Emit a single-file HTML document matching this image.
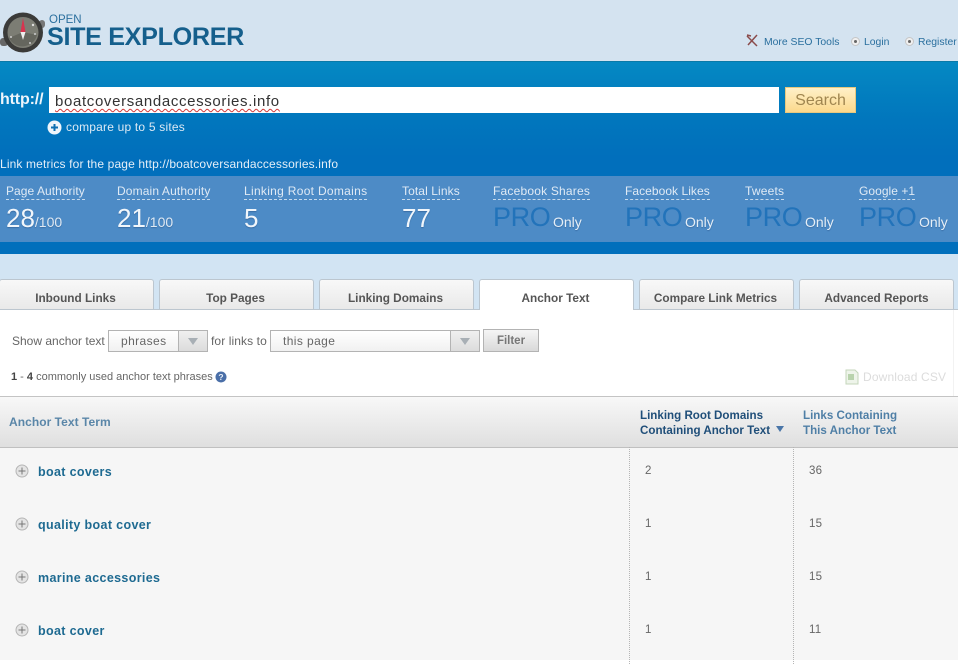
<!DOCTYPE html>
<html><head><meta charset="utf-8">
<style>
html,body{margin:0;padding:0;background:#fff}
#p{position:relative;width:958px;height:672px;overflow:hidden;font-family:"Liberation Sans",sans-serif;background:#fff}
#p div,#p svg{position:absolute}
.t{white-space:nowrap;line-height:1}
.lab{color:#dfeaf5;font-size:12px;top:185px;border-bottom:1px dashed #c5d9ec;height:14px;line-height:13px;white-space:nowrap;letter-spacing:.25px}
.num{color:#f1f6fb;font-size:26px;top:205px;line-height:26px;white-space:nowrap;text-shadow:0 1px 1px #3a6ea5}
.num small{font-size:14px;color:#dfe9f3}
.pro{color:#2273ba;font-size:27px;top:204px;line-height:27px;white-space:nowrap;letter-spacing:-.4px}
.only{color:#e6eff7;font-size:14px;top:215px;line-height:15px;white-space:nowrap;text-shadow:0 1px 1px #3a6ea5}
.tab{top:279px;height:30px;width:155px;background:linear-gradient(#f8f8f8,#e9e9e9);border:1px solid #bcc6cf;border-bottom:0;box-sizing:border-box;border-radius:3px 3px 0 0;text-align:center;font-size:11.8px;font-weight:bold;color:#555;line-height:36px}
.term{left:38px;font-size:12.5px;font-weight:bold;color:#1e6a91;white-space:nowrap;letter-spacing:.35px;line-height:14px}
.v{font-size:11.5px;color:#666;line-height:12px;white-space:nowrap;letter-spacing:.2px}
.plus{left:15px;width:14px;height:14px}
.dot{width:1px;top:447px;height:217px;border-left:1px dotted #b5b5b5}
.sel{top:330px;height:22px;box-sizing:border-box;border:1px solid #b3b3b3;background:linear-gradient(#fff,#f1f1f1);font-size:12px;color:#666;line-height:20px;letter-spacing:.4px}
.arr{top:330px;height:22px;width:30px;box-sizing:border-box;border:1px solid #b3b3b3;background:linear-gradient(#f0f0f0,#dcdcdc)}
.arr i{position:absolute;left:9px;top:7px;border-left:5px solid transparent;border-right:5px solid transparent;border-top:7px solid #a8afb5}
.g{font-size:12px;color:#666;white-space:nowrap;line-height:14px}
.nav{font-size:10.4px;color:#2a6f9e;top:36px;line-height:13px;white-space:nowrap}
.rad{top:37px;width:9px;height:9px;box-sizing:border-box;border-radius:50%;background:#f0f0f0;border:1px solid #c6c6c6}
.rad i{position:absolute;left:2px;top:2px;width:3px;height:3px;border-radius:50%;background:#666}
</style></head>
<body><div id="p">

<div style="left:0;top:0;width:958px;height:61px;background:#d4e3f0"></div>

<svg style="left:0;top:11px" width="46" height="43" viewBox="0 0 46 43">
<rect x="0" y="27" width="8" height="8" rx="3" fill="#666"/>
<rect x="39" y="9" width="6" height="8" rx="3" fill="#777"/>
<circle cx="23" cy="21.500" r="20" fill="#3b3b39"/>
<circle cx="23" cy="21.500" r="15.500" fill="#7c7d74"/>
<path d="M9 27A15 15 0 0 0 37 24L23 21Z" fill="#65665e"/>
<path d="M23 7L25.500 21L20.500 21Z" fill="#d8344f"/>
<path d="M20.500 21L25.500 21L23 29Z" fill="#eee"/>
<circle cx="33" cy="14" r="1.200" fill="#ddd"/><circle cx="35" cy="23" r="1" fill="#ccc"/><circle cx="11" cy="26" r="1" fill="#ccc"/><circle cx="30" cy="32" r="1" fill="#ccc"/>
</svg>

<div class="t" style="left:49px;top:15px;font-size:11.5px;color:#2a6f9e">OPEN</div>
<div class="t" style="left:47px;top:25px;font-size:25.2px;font-weight:bold;color:#155f8c;letter-spacing:-.35px">SITE EXPLORER</div>

<svg style="left:746px;top:34px" width="13" height="13" viewBox="0 0 13 13"><path d="M1 2L11 12M11 1L2 11M1 1L5 2" stroke="#8a4b4b" stroke-width="1.500" fill="none"/></svg>
<div class="nav" style="left:764px">More SEO Tools</div>
<div class="rad" style="left:851px"><i></i></div>
<div class="nav" style="left:864px">Login</div>
<div class="rad" style="left:905px"><i></i></div>
<div class="nav" style="left:918px">Register</div>

<div style="left:0;top:61px;width:958px;height:193px;background:linear-gradient(#0589c3 0,#0177bd 55px,#016fbc 95px,#016fbc 100%);border-top:1px solid #0a7aa8;box-sizing:border-box"></div>

<div class="t" style="left:0;top:92px;font-size:16px;font-weight:bold;color:#eef5fb;letter-spacing:-.15px">http://</div>
<div style="left:49px;top:87px;width:730px;height:26px;background:#fff"></div>
<div class="t" style="left:55px;top:94px;font-size:15px;color:#333;letter-spacing:.65px;text-decoration:underline wavy #d23a3a 1px;text-underline-offset:2px">boatcoversandaccessories.info</div>
<div style="left:785px;top:87px;width:71px;height:26px;box-sizing:border-box;background:linear-gradient(#fff0c8,#fbd98c);border:1px solid #e8c87e;text-align:center;font-size:16px;color:#a08650;line-height:26px">Search</div>
<svg style="left:47px;top:120px" width="15" height="15" viewBox="0 0 15 15"><circle cx="7.500" cy="7.500" r="7" fill="#eef5fb"/><path d="M4 7.500H11M7.500 4V11" stroke="#0d6fb2" stroke-width="2"/></svg>
<div class="t" style="left:66px;top:121px;font-size:12px;color:#dce9f4;letter-spacing:.2px">compare up to 5 sites</div>

<div class="t" style="left:0;top:158px;font-size:12px;color:#e4eef7;letter-spacing:.14px">Link metrics for the page http://boatcoversandaccessories.info</div>

<div style="left:0;top:176px;width:958px;height:66px;background:#4d8bc6"></div>

<div class="lab" style="left:6px;letter-spacing:.05px">Page Authority</div>
<div class="num" style="left:6px">28<small>/100</small></div>
<div class="lab" style="left:117px;letter-spacing:.13px">Domain Authority</div>
<div class="num" style="left:117px">21<small>/100</small></div>
<div class="lab" style="left:244px;letter-spacing:.3px">Linking Root Domains</div>
<div class="num" style="left:244px">5</div>
<div class="lab" style="left:402px;letter-spacing:.1px">Total Links</div>
<div class="num" style="left:402px">77</div>

<div class="lab" style="left:493px;letter-spacing:.2px">Facebook Shares</div>
<div class="pro" style="left:493px">PRO</div><div class="only" style="left:553px">Only</div>
<div class="lab" style="left:625px;letter-spacing:.05px">Facebook Likes</div>
<div class="pro" style="left:625px">PRO</div><div class="only" style="left:685px">Only</div>
<div class="lab" style="left:745px;letter-spacing:.2px">Tweets</div>
<div class="pro" style="left:745px">PRO</div><div class="only" style="left:805px">Only</div>
<div class="lab" style="left:859px;letter-spacing:.05px">Google +1</div>
<div class="pro" style="left:859px">PRO</div><div class="only" style="left:919px">Only</div>

<div style="left:0;top:254px;width:958px;height:56px;background:#d2e4f3"></div>
<div style="left:0;top:309px;width:958px;height:1px;background:#bcc6cf"></div>

<div class="tab" style="left:-1px;padding-right:2px">Inbound Links</div>
<div class="tab" style="left:159px;padding-right:2px">Top Pages</div>
<div class="tab" style="left:319px;padding-right:2px">Linking Domains</div>
<div class="tab" style="left:479px;height:31px;background:#fff;padding-right:2px">Anchor Text</div>
<div class="tab" style="left:639px;padding-right:2px">Compare Link Metrics</div>
<div class="tab" style="left:799px">Advanced Reports</div>

<div style="left:953px;top:310px;width:1px;height:86px;background:#f2f2f2"></div>

<div class="g" style="left:12px;top:334px">Show anchor text</div>
<div class="sel" style="left:108px;width:72px;padding-left:12px">phrases</div>
<div class="arr" style="left:178px"><i></i></div>
<div class="g" style="left:211px;top:334px;letter-spacing:.1px">for links to</div>
<div class="sel" style="left:270px;width:182px;padding-left:12px">this page</div>
<div class="arr" style="left:450px"><i></i></div>
<div style="left:483px;top:329px;width:56px;height:23px;box-sizing:border-box;border:1px solid #b3b3b3;background:linear-gradient(#f5f5f5,#d9d9d9);text-align:center;font-size:11.500px;font-weight:bold;color:#777;line-height:23px">Filter</div>

<div class="t" style="left:11px;top:372px;font-size:11px;color:#666"><b style="color:#444">1</b> - <b style="color:#444">4</b> commonly used anchor text phrases</div>
<svg style="left:215px;top:371px" width="12" height="12" viewBox="0 0 12 12"><circle cx="6" cy="6" r="5.500" fill="#4a6fa8"/><text x="6" y="9" font-size="8.500" font-weight="bold" fill="#e8eef6" text-anchor="middle" font-family="Liberation Sans">?</text></svg>

<svg style="left:845px;top:369px" width="14" height="16" viewBox="0 0 14 16"><path d="M1 1H10L13 4V15H1Z" fill="#eef4ea" stroke="#c4d6bb"/><rect x="3" y="5" width="6" height="6" fill="#b9d3ad"/></svg>
<div class="t" style="left:863px;top:371px;font-size:12px;color:#dcdcdc;letter-spacing:.15px">Download CSV</div>

<div style="left:0;top:396px;width:958px;height:52px;box-sizing:border-box;border-top:1px solid #c4c4c4;border-bottom:1px solid #c0c0c0;background:linear-gradient(#f8f8f8,#dfdfdf)"></div>
<div class="t" style="left:9px;top:416px;font-size:12px;font-weight:bold;color:#5a86a8;letter-spacing:.05px">Anchor Text Term</div>
<div class="t" style="left:640px;top:408px;font-size:11.6px;font-weight:bold;color:#1f4e79;line-height:15px">Linking Root Domains<br>Containing Anchor Text</div>
<div style="left:776px;top:426px;border-left:4.500px solid transparent;border-right:4.500px solid transparent;border-top:6px solid #4a76a8"></div>
<div class="t" style="left:803px;top:408px;font-size:11.6px;font-weight:bold;color:#4f7fa6;line-height:15px">Links Containing<br>This Anchor Text</div>

<div style="left:0;top:448px;width:958px;height:212px;background:#f6f6f6"></div>
<div class="dot" style="left:629px"></div>
<div class="dot" style="left:793px"></div>

<svg class="plus" style="top:464px" viewBox="0 0 14 14"><circle cx="7" cy="7" r="6" fill="#e4e4e4" stroke="#b5b5b5"/><path d="M3.500 7H10.500M7 3.500V10.500" stroke="#777"/></svg>
<div class="term" style="top:465px">boat covers</div>
<div class="v" style="left:645px;top:465px">2</div>
<div class="v" style="left:809px;top:465px">36</div>

<svg class="plus" style="top:517px" viewBox="0 0 14 14"><circle cx="7" cy="7" r="6" fill="#e4e4e4" stroke="#b5b5b5"/><path d="M3.500 7H10.500M7 3.500V10.500" stroke="#777"/></svg>
<div class="term" style="top:518px">quality boat cover</div>
<div class="v" style="left:645px;top:518px">1</div>
<div class="v" style="left:809px;top:518px">15</div>

<svg class="plus" style="top:570px" viewBox="0 0 14 14"><circle cx="7" cy="7" r="6" fill="#e4e4e4" stroke="#b5b5b5"/><path d="M3.500 7H10.500M7 3.500V10.500" stroke="#777"/></svg>
<div class="term" style="top:571px">marine accessories</div>
<div class="v" style="left:645px;top:571px">1</div>
<div class="v" style="left:809px;top:571px">15</div>

<svg class="plus" style="top:623px" viewBox="0 0 14 14"><circle cx="7" cy="7" r="6" fill="#e4e4e4" stroke="#b5b5b5"/><path d="M3.500 7H10.500M7 3.500V10.500" stroke="#777"/></svg>
<div class="term" style="top:624px">boat cover</div>
<div class="v" style="left:645px;top:624px">1</div>
<div class="v" style="left:809px;top:624px">11</div>

</div></body></html>
